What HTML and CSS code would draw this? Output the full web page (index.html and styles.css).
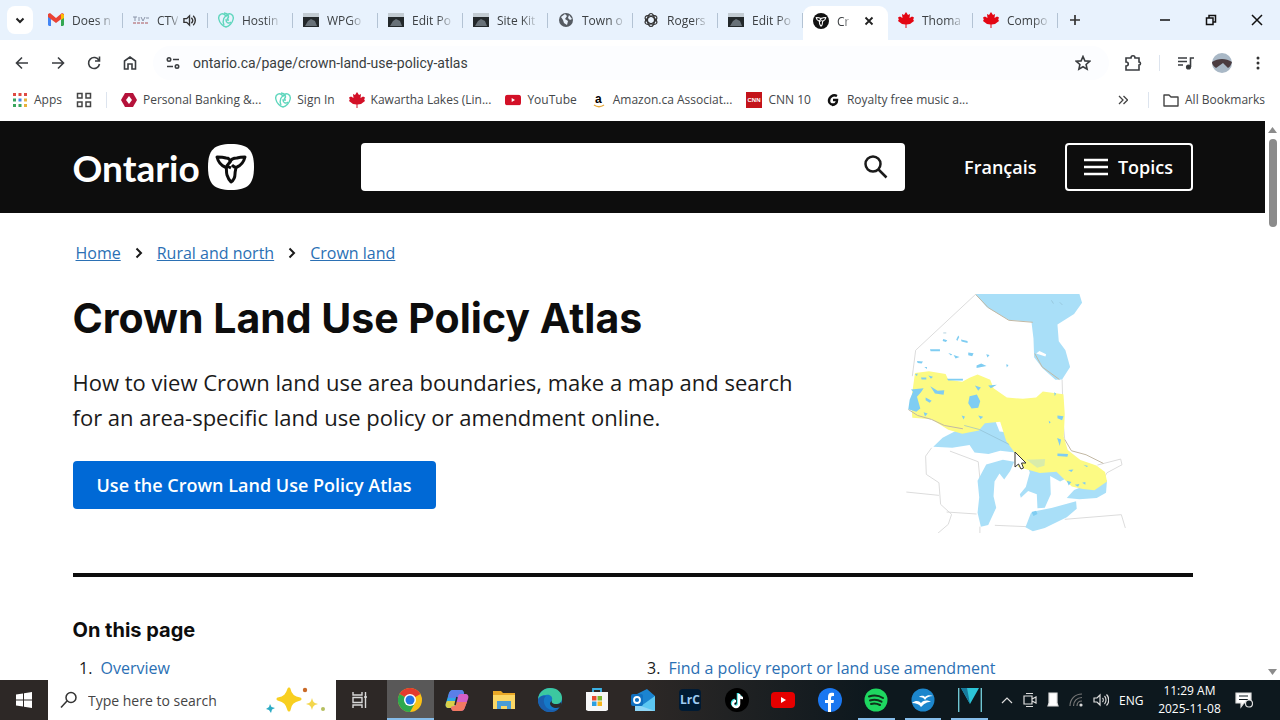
FILE: index.html
```html
<!DOCTYPE html>
<html lang="en">
<head>
    <meta charset="UTF-8">
    <title>Crown Land Use Policy Atlas | ontario.ca</title>
    <link rel="stylesheet" href="styles.css">
</head>
<body>
<!-- shared icons -->
<svg class="defs" width="0" height="0">
    <symbol id="i-photo" viewBox="0 0 16 16"><rect y="1" width="16" height="14" fill="#c3ccd3"/><rect y="5" width="16" height="10" fill="#23282b"/><path d="M2 14l3-5 3-2 4 2 2 5z" fill="#687178"/></symbol>
    <symbol id="i-maple" viewBox="0 0 16 16"><path d="M8 0l2 3 2-1-.5 4L14 4.500l2 1-.8 2 .8 1.500-4 3-3.500.5L8.500 16h-1l0-3.500L4 12 0 9l.8-1.500-.8-2 2-1L4.500 6 4 2l2 1z"/></symbol>
    <symbol id="i-godaddy" viewBox="0 0 16 16"><g fill="none" stroke="#5fd6bd" stroke-width="1.400"><path d="M8 4C5 0 0 2 .8 7c.7 4 4.200 7.500 7.200 8 3-.5 6.500-4 7.200-8C16 2 11 0 8 4"/><path d="M10 3c-4 1-6 5-4 10M11 8H8c0 3 3 4 5 2M6 1c4 0 6 4 3 6"/></g></symbol>
    <symbol id="i-trillium" viewBox="0 0 46 46"><g fill="none" stroke-width="3" stroke-linejoin="round"><path d="M22 18c0-3-1-4-4-4-3-1-6-1-9-1 1 4 3 8 8 10l2 0c0-3 2-3 3-5z"/><path d="M22 18c1-3 4-4 7-4 3-1 5-1 8-1-1 4-3 8-8 10-3 1-4-1-5-2"/><path d="M18 23c1 3 0 5 1 8 1 3 2 5 4 7 3-2 4-5 4-8 0-3 1-5 1-7M19 22l4 2"/></g></symbol>
    <symbol id="i-yt" viewBox="0 0 24 16"><rect width="24" height="16" rx="4"/><path d="M10 5l5 3-5 3z" fill="#fff"/></symbol>
</svg>

<div class="tabstrip">
    <button class="tab-search" aria-label="Search tabs"><svg width="10" height="10" viewBox="0 0 10 10"><path d="M1.500 3.500L5 7l3.500-3.500" fill="none" stroke="#222" stroke-width="2"/></svg></button>
    <div class="tabs">
        <a href="#" class="tab"><svg class="ico" viewBox="0 0 16 16"><path d="M0 3h3v11H1L0 13z" fill="#4285f4"/><path d="M13 3h3v10l-1 1h-2z" fill="#34a853"/><path d="M0 2l2-1 6 5 6-5 2 1v3l-8 6-8-6z" fill="#ea4335"/><path d="M13 2h2l1 1v3l-3 2z" fill="#fbbc04"/></svg><span>Does n</span></a>
        <a href="#" class="tab"><svg class="ico" viewBox="0 0 16 16"><path d="M0 5h4M2 5v4M6 5v4M8 5l2 4 2-4M13 6h3" stroke="#8a94a8" fill="none"/><path d="M0 11h15" stroke="#c9a3ab" stroke-width="2" stroke-dasharray="3 1"/></svg><span>CTV</span><svg class="sound" viewBox="0 0 14 14"><path d="M1 5h3l3-3v10L4 9H1z" fill="none" stroke="#333" stroke-width="1.500"/><path d="M9 4c2 2 2 4 0 6M11 2c3 3 3 7 0 10" fill="none" stroke="#333" stroke-width="1.500"/></svg></a>
        <a href="#" class="tab"><svg class="ico"><use href="#i-godaddy"/></svg><span>Hostin</span></a>
        <a href="#" class="tab"><svg class="ico"><use href="#i-photo"/></svg><span>WPGo</span></a>
        <a href="#" class="tab"><svg class="ico"><use href="#i-photo"/></svg><span>Edit Po</span></a>
        <a href="#" class="tab"><svg class="ico"><use href="#i-photo"/></svg><span>Site Kit</span></a>
        <a href="#" class="tab"><svg class="ico" viewBox="0 0 16 16"><circle cx="8" cy="8" r="7" fill="#555b62"/><path d="M3 5l4-3 2 2-2 3 3 2-1 4-3-2-1-3zM11 3l3 4-2 1-2-2z" fill="#e9f2fc"/></svg><span>Town o</span></a>
        <a href="#" class="tab"><svg class="ico" viewBox="0 0 16 16"><g fill="none" stroke="#333" stroke-width="1.200"><ellipse cx="8" cy="8" rx="3.500" ry="6.500"/><ellipse cx="8" cy="8" rx="3.500" ry="6.500" transform="rotate(60 8 8)"/><ellipse cx="8" cy="8" rx="3.500" ry="6.500" transform="rotate(120 8 8)"/></g></svg><span>Rogers</span></a>
        <a href="#" class="tab"><svg class="ico"><use href="#i-photo"/></svg><span>Edit Po</span></a>
        <a href="#" class="tab active"><svg class="ico" viewBox="0 0 46 46"><circle cx="23" cy="23" r="23" fill="#111"/><use href="#i-trillium" stroke="#fff"/></svg><span>Cr</span><svg class="close" viewBox="0 0 10 10"><path d="M1.500 1.500l7 7M8.500 1.500l-7 7" stroke="#222" stroke-width="1.800"/></svg></a>
        <a href="#" class="tab"><svg class="ico red"><use href="#i-maple"/></svg><span>Thoma</span></a>
        <a href="#" class="tab"><svg class="ico red"><use href="#i-maple"/></svg><span>Compo</span></a>
    </div>
    <button class="new-tab" aria-label="New tab"><svg width="12" height="12" viewBox="0 0 12 12"><path d="M6 1v10M1 6h10" stroke="#333" stroke-width="1.700"/></svg></button>
    <div class="win">
        <button aria-label="Minimize"><svg width="12" height="12"><path d="M1 6h10" stroke="#111" stroke-width="1.500"/></svg></button>
        <button aria-label="Restore"><svg width="12" height="12"><path d="M1.500 4h6.500v6.500H1.500zM4 4V1.500h6.500V8H8" fill="none" stroke="#111" stroke-width="1.500"/></svg></button>
        <button aria-label="Close"><svg width="12" height="12"><path d="M1 1l10 10M11 1L1 11" stroke="#111" stroke-width="1.500"/></svg></button>
    </div>
</div>

<div class="toolbar">
    <button aria-label="Back"><svg width="16" height="16" viewBox="0 0 16 16"><path d="M14 8H3M8 2.500L2.500 8 8 13.500"/></svg></button>
    <button aria-label="Forward"><svg width="16" height="16" viewBox="0 0 16 16"><path d="M2 8h11M8 2.500L13.500 8 8 13.500"/></svg></button>
    <button aria-label="Reload"><svg width="16" height="16" viewBox="0 0 16 16"><path d="M13 5.500A5.500 5.500 0 1 0 13.500 9M13.500 1.500v4.500H9"/></svg></button>
    <button aria-label="Home"><svg width="16" height="16" viewBox="0 0 16 16"><path d="M2.500 14V6L8 2l5.500 4v8H10V9H6v5z"/></svg></button>
    <div class="omnibox">
        <svg width="16" height="16" viewBox="0 0 16 16"><circle cx="4" cy="4.500" r="1.700"/><path d="M8 4.500h6M2 11.500h6"/><circle cx="12" cy="11.500" r="1.700"/></svg>
        <input type="text" aria-label="Address" value="ontario.ca/page/crown-land-use-policy-atlas">
        <svg width="16" height="16" viewBox="0 0 16 16"><path d="M8 1.500l1.900 4.400 4.800.4-3.600 3.200 1 4.700L8 11.700l-4.100 2.500 1-4.700L1.300 6.300l4.800-.4z"/></svg>
    </div>
    <button class="ext" aria-label="Extensions"><svg width="18" height="18" viewBox="0 0 18 18"><path d="M2 4h5c0-3 4-3 4 0h4v4c2 0 2 3 0 3v5H2v-4c3 0 3-4 0-4z"/></svg></button>
    <i class="rule"></i>
    <button class="media" aria-label="Media"><svg width="18" height="16" viewBox="0 0 18 16"><path d="M1 3h9M1 6.500h9M1 10h5M13.500 12V3H17"/><circle cx="11.500" cy="12" r="1.800" fill="#333"/></svg></button>
    <button class="face" aria-label="Profile"><svg width="20" height="20" viewBox="0 0 20 20"><circle cx="10" cy="10" r="10" class="sky"/><path d="M0 9c6-4 14-4 20 0-1 3-2 5-4 6l-5-5-7 5C1 13 0 11 0 9z" class="hill"/></svg></button>
    <button class="more" aria-label="Menu"><svg width="4" height="16"><g class="dots"><circle cx="2" cy="3" r="1.500"/><circle cx="2" cy="8" r="1.500"/><circle cx="2" cy="13" r="1.500"/></g></svg></button>
</div>

<div class="bookmarks">
    <a href="#"><svg class="ico" viewBox="0 0 16 16"><path d="M1 1h3v3H1zM12 1h3v3h-3zM6.500 1h3v3h-3z" fill="#df4a43"/><path d="M1 6.500h3v3H1z" fill="#39a55d"/><path d="M6.500 6.500h3v3h-3z" fill="#4385e5"/><path d="M12 6.500h3v3h-3z" fill="#e7b23b"/><path d="M1 12h3v3H1zM6.500 12h3v3h-3z" fill="#39a55d"/><path d="M12 12h3v3h-3z" fill="#e7b23b"/></svg>Apps</a>
    <a href="#" aria-label="Tab groups"><svg class="ico" viewBox="0 0 16 16"><path d="M1.500 1.500h4.500v4.500H1.500zM10 1.500h4.500v4.500H10zM1.500 10h4.500v4.500H1.500zM10 10h4.500v4.500H10z" fill="none" stroke="#444" stroke-width="1.500"/></svg></a>
    <i class="rule"></i>
    <a href="#"><svg class="ico" viewBox="0 0 16 16"><path d="M4 1h8l4 7-4 7H4L0 8z" fill="#b5123a"/><path d="M8 4l3 4-3 4-3-4z" fill="#fff"/></svg>Personal Banking &amp;...</a>
    <a href="#"><svg class="ico"><use href="#i-godaddy"/></svg>Sign In</a>
    <a href="#"><svg class="ico crimson"><use href="#i-maple"/></svg>Kawartha Lakes (Lin...</a>
    <a href="#"><svg class="ico crimson" viewBox="0 0 16 16"><use href="#i-yt" y="2.500" width="16" height="11"/></svg>YouTube</a>
    <a href="#"><svg class="ico" viewBox="0 0 16 16"><text x="4" y="11" class="amz">a</text><path d="M3 13c3 2 7 2 10 0" fill="none" stroke="#e5a93c" stroke-width="1.500"/></svg>Amazon.ca Associat...</a>
    <a href="#"><svg class="ico" viewBox="0 0 16 16"><rect width="16" height="16" fill="#c4131a"/><text x="8" y="10" class="cnn">CNN</text></svg>CNN 10</a>
    <a href="#"><svg class="ico" viewBox="0 0 16 16"><path d="M12 4C8 2 4 5 4 9c0 3 3 4 5 3M8 8h4c0 3-2 5-5 5" fill="none" stroke="#111" stroke-width="2.500"/></svg>Royalty free music a...</a>
    <button class="overflow" aria-label="More bookmarks"><svg width="10" height="10"><path d="M1 1l4 4-4 4M5.500 1l4 4-4 4" fill="none" stroke="#444" stroke-width="1.300"/></svg></button>
    <i class="rule"></i>
    <a href="#" class="all"><svg class="ico" viewBox="0 0 16 16"><path d="M1 3h5l2 2h7v9H1z" fill="none" stroke="#444" stroke-width="1.400" stroke-linejoin="round"/></svg>All Bookmarks</a>
</div>

<div class="viewport">
    <div class="page">
        <header>
            <div class="wrap head">
                <a href="#" class="logo">Ontario <svg width="46" height="46" viewBox="0 0 46 46"><path d="M23 0c17 0 23 6 23 23s-6 23-23 23S0 40 0 23 6 0 23 0z" fill="#fff"/><use href="#i-trillium" stroke="#0d0d0d"/></svg></a>
                <form class="search">
                    <input type="text" aria-label="Search">
                    <button type="button" aria-label="Submit search"><svg width="26" height="26" viewBox="0 0 26 26"><circle cx="10" cy="10" r="7.500"/><path d="M15.500 15.500l8 8"/></svg></button>
                </form>
                <a href="#" class="lang">Français</a>
                <button class="topics"><svg width="24" height="18"><path d="M0 2h24M0 9h24M0 16h24" stroke="#fff" stroke-width="2.500"/></svg>Topics</button>
            </div>
        </header>
        <main class="wrap">
            <nav class="crumbs">
                <a href="#">Home</a>
                <svg width="8" height="12"><path d="M1.500 1.500L6 6l-4.500 4.500"/></svg>
                <a href="#">Rural and north</a>
                <svg width="8" height="12"><path d="M1.500 1.500L6 6l-4.500 4.500"/></svg>
                <a href="#">Crown land</a>
            </nav>
            <section class="intro">
                <div>
                    <h1>Crown Land Use Policy Atlas</h1>
                    <p>How to view Crown land use area boundaries, make a map and search for an area-specific land use policy or amendment online.</p>
                    <button class="cta">Use the Crown Land Use Policy Atlas</button>
                </div>
                <figure>
                    <svg class="map" viewBox="40 40 670 720">
                        <g fill="none" stroke="#dcdcdc" stroke-width="3">
                            <path d="M250 46L72 212 62 290"/>
                            <path d="M512 300l4 140 4 40M120 505l-18 25 2 55 38 25 5 65 33 30-10 30-35 30M44 638l98 10M165 698l90 6M175 515l85 32 5 50M310 738l95 4M520 720l170-14 12 40M635 600l12-20 45-24-4-17-70 18M265 742v20"/>
                        </g>
                        <g fill="#a9dff8">
                            <path d="M252 43h312l8 26-24 34-50 32 4 50 20 27 14 50-24 38-20 1-38-34-26-34-2-56-6-50-68-6-66-38z"/>
                            <path d="M125 502l28-27 65-34 42-25 50 5 14 35 32 4 12 42 10 18-52-6-35 10-42-5-15-22-52 8z"/>
                            <path d="M258 604l26-49 50-14 34 6-12 28-18 25-14-18-15 24-3 45 8 34-24 52-22 5-10-42 5-46z"/>
                            <path d="M400 541l50-6 50 10 34 47-28 14-30-16 2 55-18 40-22 2-2-42-26-10-22 20-3-10 18-22 12-44z"/>
                            <path d="M402 744l16-42 20-8 42-8 74-20 2 22-30 26-66 32-36 10z"/>
                            <path d="M526 656l22-24 45-18 54-12-3 38-28 16-52 4z"/>
                        </g>
                        <path fill="#fcfa83" d="M70 280l42-5 50 8 8 18 42 6 22-12 24-10 20 8 18 8 10 25 40 28 48 4 40-4 20-18 44 6 18 2 4 60-3 68 12 40 38 30 48 16 26 20 6 28-38 27-34-4-34-8-46-44-50 4-65-18-8-40-28-38-18-58-46 4-18 22-50 10-42-12-50-32-58-4-4-48z"/>
                        <path fill="none" stroke="#c2b8a4" stroke-width="3" d="M50 390l28 18 42 12 38 18 56 10M430 222l22 40 52 38M520 480l20 34 44 12 52 26M252 44l38 40 62 38 72 6"/>
                        <g fill="#7fcdf2">
                            <path d="M58 330l38-4-8 12-12 14 10 35-12 10-24-8 4-28 10-24zM116 320l22 14 20-2-2 14-26-4zM234 350l22-5 10 20-6 20-20 2-10-16z"/>
                            <path d="M155 178l12 4-4 5-10-3zM194 180l6-12 3 4-6 12zM208 180l20 4v6l-18-4zM115 209h30v6h-28zM170 220l12 4-4 4zM186 226l18 6-12 5zM230 219l16 2-4 9-12-3zM284 224l10 2-6 8zM255 258l14-6 16 7-30 6zM76 244l18 2-4 6-12-2zM98 262h8v6zM110 288l14 4-6 6zM88 294h16v6H90zM70 284l8-2-2 8zM166 298h48v5h-44zM250 318l18 6-8 10zM290 318l26-2-18 10zM102 354l18 10-6 6-12-8zM96 398l12 4-8 9zM210 408l10 3-4 9zM260 408l15 4-8 7zM498 408l18 2-4 12-14-6zM497 476l12 4-4 20zM498 522l32 2-2 8-30-2zM526 604l14 4-8 10zM550 616l14-2-4 8zM572 610l10-2v8zM530 572l16-2-6 8zM488 338l6 4-4 8zM344 254l7 2-5 8zM472 424l6 4-5 4zM576 556l14 4-4 3zM420 698l14-4 4 10-12 6z"/>
                        </g>
                        <path fill="#d9ecaa" d="M405 541l56-2-2 20-22 6z"/>
                        <path fill="#fff" d="M434 222l10-8 20 10-2 7z"/>
                        <path fill="none" stroke="#8fbdd0" stroke-width="2" d="M218 438l45 12 90 45M480 62l6 10M505 68l8 8M155 160h9"/>
                    </svg>
                    <svg class="pointer" width="13" height="19" viewBox="0 0 13 19"><path d="M1 1v15l3.500-3 2.500 5 2.500-1-2-5H12z" fill="#fff" stroke="#333"/></svg>
                </figure>
            </section>
            <section class="toc">
                <h2>On this page</h2>
                <ol>
                    <li><a href="#">Overview</a></li>
                    <li value="3"><a href="#">Find a policy report or land use amendment</a></li>
                </ol>
            </section>
        </main>
    </div>
    <div class="scroll">
        <svg width="9" height="6"><path d="M0 6l4.500-6L9 6z" fill="#8b8b8b"/></svg>
        <i></i>
        <svg width="9" height="6"><path d="M0 0l4.500 6L9 0z" fill="#8b8b8b"/></svg>
    </div>
</div>

<footer class="taskbar">
    <button class="start" aria-label="Start"><svg width="16" height="16"><path d="M0 2.500l7-1V7.500H0zM8 1.300L16 0v7.500H8zM0 8.500h7v6L0 13.500zM8 8.500h8V16l-8-1.300z" fill="#fff"/></svg></button>
    <label class="find">
        <svg width="18" height="18" viewBox="0 0 18 18"><circle cx="11" cy="6.500" r="5"/><path d="M7 10l-6 6.500"/></svg>
        <input type="text" placeholder="Type here to search">
        <svg class="spark" width="66" height="26" viewBox="0 0 66 26"><path d="M23 2c1 6 4 9 11 10-7 2-10 4-11 11-2-7-4-9-11-11 7-1 9-4 11-10z" fill="#f8cf20" stroke="#f8cf20" stroke-width="3" stroke-linejoin="round"/><path d="M46 11c1 4 2 5 6 6-4 1-5 2-6 6-1-4-2-5-6-6 4-1 5-2 6-6z" fill="#f3d64c"/><path d="M4 17l1.500 3L9 21l-3 1.500L5 26l-2-3-3-1 3-2z" fill="#2cabc4"/><circle cx="39" cy="3" r="2.200" fill="#c96a28"/><circle cx="57" cy="22" r="2" fill="#b5bf5f"/></svg>
    </label>
    <button class="taskview" aria-label="Task view"><svg width="16" height="16"><path d="M1 0v3h9V0M1 16v-3h9v3M1 5.500h9v5H1zM13.500 0v16M12 5h3" fill="none" stroke="#d8d8d8" stroke-width="1.400"/></svg></button>
    <div class="apps">
        <button class="on" aria-label="Chrome"><svg viewBox="0 0 24 24"><circle cx="12" cy="12" r="12" fill="#fbc116"/><path d="M12 12L1.600 6A12 12 0 0 1 22.400 6z" fill="#e33b2e"/><path d="M1.600 6A12 12 0 0 0 12 24l5-9-5-3z" fill="#2da94f"/><circle cx="12" cy="12" r="6" fill="#fff"/><circle cx="12" cy="12" r="4.500" fill="#2374e6"/></svg></button>
        <button aria-label="Copilot"><svg viewBox="0 0 24 24"><path d="M8 2h8c2 0 3 2 3 4l-4 1-4 12-2 1H4c-3 0-4-2-3-5l3-10c1-2 2-3 4-3z" fill="#2da8e8"/><path d="M8 2h8c2 0 3 2 3 4l-4 1-1 3H3l1-5c1-2 2-3 4-3z" fill="#5b7fe8"/><path d="M1 15l1-2h9l-2 7H4c-3 0-4-2-3-5z" fill="#d9d04a"/><path d="M16 6h4c3 0 4 2 3 5l-3 8c-1 3-2 4-5 4H9c-2 0-3-2-3-4l4-1 3-9c0-2 1-3 3-3z" fill="#d45fc8"/><path d="M11 14h11l-2 5c-1 3-2 4-5 4H9c-2 0-3-2-3-4l4-1z" fill="#f27a62"/><path d="M12 9l-2 8" stroke="#2b2727" stroke-width="1.500"/></svg></button>
        <button aria-label="File Explorer"><svg viewBox="0 0 24 24"><path d="M1 3h8l2 2h12v5H1z" fill="#e9a827"/><path d="M1 7h22v14H1z" fill="#fbd765"/><path d="M5 13h14v8h-4v-3H9v3H5z" fill="#4a9cd6"/></svg></button>
        <button aria-label="Edge"><svg viewBox="0 0 24 24"><circle cx="12" cy="12" r="12" fill="#1578c8"/><path d="M0 11C1 4 6 0 12 0c8 0 12 5 12 10 0 4-3 6-6 6-4 0-5-2-4-4 1-3-2-6-6-5-4 0-7 2-8 4z" fill="#3cc8a0"/><path d="M8 8c-3 2-3 8 1 12 4 3 9 2 12 0-2 3-5 4-9 4C5 24 0 18 0 12c1-3 4-5 8-4z" fill="#1a5fae"/><path d="M14 12c-1 2 0 4 4 4 2 0 4 0 5-2l1 4c-3 3-12 3-12-3z" fill="#2b2a2b"/></svg></button>
        <button aria-label="Store"><svg viewBox="0 0 24 24"><path d="M8 5V1h8v4" fill="none" stroke="#3cb2e6" stroke-width="1.800"/><path d="M1 4h22v18l-2 1H3l-2-1z" fill="#f7f7f7"/><path d="M7 8h4.500v4.500H7z" fill="#e64a2e"/><path d="M12.500 8H17v4.500h-4.500z" fill="#7db72f"/><path d="M7 13.500h4.500V18H7z" fill="#2c9fe0"/><path d="M12.500 13.500H17V18h-4.500z" fill="#f7b51b"/></svg></button>
        <button aria-label="Outlook"><svg viewBox="0 0 24 24"><path d="M6 6l10-5 8 7v12H6z" fill="#1b84d0"/><path d="M24 8L10 18v5h14z" fill="#5cc7f2"/><path d="M4 16l20 7H4z" fill="#8fd6f6"/><rect y="6" width="12" height="12" rx="2" fill="#1070c0"/><circle cx="6" cy="12" r="3" fill="none" stroke="#fff" stroke-width="1.800"/></svg></button>
        <button aria-label="Lightroom Classic"><svg viewBox="0 0 24 24"><rect x="1" y="1" width="22" height="22" rx="4" fill="#001a33"/><text x="12" y="16" class="lrc">LrC</text></svg></button>
        <button aria-label="TikTok"><svg viewBox="0 0 24 24"><circle cx="12" cy="12" r="12" fill="#000"/><path d="M13 5v10a3 3 0 1 1-3-3M13 5c0 3 2 4 4 4" fill="none" stroke="#3fe3e0" stroke-width="2.500"/><path d="M14 6v10a3 3 0 1 1-3-3M14 6c0 3 2 4 4 4" fill="none" stroke="#fff" stroke-width="2.500"/></svg></button>
        <button aria-label="YouTube"><svg class="yt" viewBox="0 0 24 16"><use href="#i-yt"/></svg></button>
        <button aria-label="Facebook"><svg viewBox="0 0 24 24"><circle cx="12" cy="12" r="12" fill="#1a77f0"/><path d="M10 24v-9H7v-3h3V9c0-4 2-5 6-4v3c-2 0-3 0-3 2v2h3l-.5 3H13v9z" fill="#fff"/></svg></button>
        <button class="run" aria-label="Spotify"><svg viewBox="0 0 24 24"><circle cx="12" cy="12" r="11.500" fill="#1ed760"/><path d="M5 8.500c5-1.500 10-1 14 1.500M6 12.500c4-1.300 8-.8 11.500 1.200M7 16c3-1 6-.6 9 1" fill="none" stroke="#10301b" stroke-width="2" stroke-linecap="round"/></svg></button>
        <button class="run" aria-label="OpenOffice"><svg viewBox="0 0 24 24"><circle cx="12" cy="12" r="11.500" fill="#1c86cc"/><path d="M8 9c3-2 5-1 6 0 2-2 5-2 8-1-4 0-6 1-8 4-1-2-3-3-6-3zM1 15c4-3 7-2 9 0 3-3 6-3 10-1-5 0-7 2-10 5-2-3-5-4-9-4z" fill="#fff"/></svg></button>
        <button class="run" aria-label="Movie editor"><svg viewBox="0 0 24 24"><path d="M.7 0v24M23.300 0v24" stroke="#6fc5d2" stroke-width="1.400"/><path d="M3 0h18l-9 16z" fill="#2cc5d8"/><path d="M3 0h6l3 16z" fill="#187a9c"/></svg></button>
    </div>
    <div class="tray">
        <svg width="12" height="8"><path d="M1 7l5-5 5 5"/></svg>
        <svg width="14" height="16"><path d="M1 4h8v8H1zM9 7l4-2v6l-4-2M3 1.500h7M3 14.500h7"/></svg>
        <svg width="12" height="16"><path d="M2 1h8v10l1 3H1l1-3z" fill="#fff"/></svg>
        <svg width="14" height="14"><g class="wifi"><path d="M1 13C1 6 6 1 13 1M4.500 13c0-5 3.500-8.500 8.500-8.500M8 13c0-3 2-5 5-5"/></g><circle cx="12" cy="12" r="1" fill="#ddd"/></svg>
        <svg width="16" height="14"><path d="M1 5h3l3-3v10L4 9H1zM9.500 5c1 1 1 3 0 4M11.500 3c2 2 2 6 0 8M13.500 1.500c3 3 3 8 0 11"/></svg>
        <span class="eng">ENG</span>
        <span class="clock">11:29 AM<br>2025-11-08</span>
        <svg width="18" height="18"><path d="M1 2h15v10H9l-3 4v-4H1z" fill="#fff"/><path d="M4 5h9M4 8.500h9" class="ink"/><circle cx="14" cy="12.500" r="3.500" class="badge"/></svg>
    </div>
</footer>
</body>
</html>
```
FILE: styles.css
```css
* {
    box-sizing: border-box;
}
body {
    margin: 0;
    height: 100vh;
    display: flex;
    flex-direction: column;
    overflow: hidden;
    background: #fff;
    color: #1a1a1a;
    font-family: "Open Sans", sans-serif;
}
button, input {
    font: inherit;
    border: 0;
    padding: 0;
    background: none;
    color: inherit;
}
button {
    display: flex;
    align-items: center;
    justify-content: center;
}
a {
    color: inherit;
    text-decoration: none;
}
svg {
    flex: none;
    display: block;
}
.defs {
    position: absolute;
}
.ico {
    width: 16px;
    height: 16px;
}
.red { fill: #e30613; }
.crimson { fill: #d31027; }

/* tab strip */
.tabstrip {
    flex: none;
    height: 40px;
    display: flex;
    align-items: center;
    background: #e8f2fd;
    font-size: 12px;
    color: #3c4043;
}
.tab-search {
    flex: none;
    width: 26px;
    height: 28px;
    margin: 0 5px 0 7px;
    border-radius: 8px;
    background: #fff;
}
.tabs {
    flex: 0 1 1020px;
    min-width: 0;
    align-self: stretch;
    display: flex;
}
.tab {
    position: relative;
    flex: 1;
    min-width: 0;
    display: flex;
    align-items: center;
    gap: 8px;
    padding: 0 4px 0 10px;
}
.tab::after {
    content: "";
    position: absolute;
    right: 0;
    top: 13px;
    height: 15px;
    border-right: 1px solid #b3c3d4;
}
.tab span {
    white-space: nowrap;
    mask-image: linear-gradient(to right, #000 65%, #0003);
}
.tab .sound {
    width: 13px;
    height: 13px;
    margin-left: -3px;
}
.tab .close {
    width: 10px;
    height: 10px;
    margin: 0 10px 0 auto;
}
.active {
    align-self: flex-end;
    height: 34px;
    padding-bottom: 4px;
    background: #fff;
    border-radius: 9px 9px 0 0;
}
.active::after {
    display: none;
}
.new-tab {
    width: 34px;
    height: 28px;
}
.win {
    margin-left: auto;
    display: flex;
}
.win button {
    width: 46px;
    height: 40px;
}

/* address row */
.toolbar {
    flex: none;
    height: 46px;
    display: flex;
    align-items: center;
    padding: 0 9px 0 4px;
    font: 14px Roboto, sans-serif;
}
.toolbar button {
    width: 36px;
    height: 30px;
}
.toolbar svg {
    fill: none;
    stroke: #3a3d40;
    stroke-width: 1.600;
}
.omnibox {
    flex: 1;
    display: flex;
    align-items: center;
    gap: 12px;
    height: 34px;
    margin: 0 6px 0 5px;
    padding: 0 18px 0 12px;
    border-radius: 17px;
    background: #fcfdff;
}
.omnibox input {
    flex: 1;
    outline: 0;
    color: #3a3d40;
}
.rule {
    width: 1px;
    height: 16px;
    background: #dde4ee;
}
.toolbar .rule {
    margin: 0 8px;
}
.toolbar .more {
    width: 36px;
    margin-right: -5px;
}
.toolbar .dots {
    fill: #333;
    stroke: none;
}
.toolbar .sky {
    fill: #a9b8c6;
    stroke: none;
}
.toolbar .hill {
    fill: #4b3c40;
    stroke: none;
}

/* bookmarks */
.bookmarks {
    flex: none;
    height: 35px;
    display: flex;
    align-items: center;
    gap: 14px;
    padding: 0 15px 8px 12px;
    font-size: 12px;
    color: #44474a;
    white-space: nowrap;
}
.bookmarks a {
    display: flex;
    align-items: center;
    gap: 6px;
}
.overflow {
    margin-left: auto;
}
.overflow + .rule {
    margin-left: 6px;
}
.amz {
    font: bold 12px "Liberation Sans", sans-serif;
}
.cnn {
    font: bold 6px "Liberation Sans", sans-serif;
    text-anchor: middle;
    fill: #fff;
}

/* web page */
.viewport {
    flex: 1;
    min-height: 0;
    display: flex;
}
.page {
    flex: 1;
    overflow: hidden;
}
.wrap {
    max-width: 1120px;
    margin: 0 auto;
}
header {
    background: #0d0d0d;
    color: #fff;
}
.head {
    height: 92px;
    display: flex;
    align-items: center;
}
.logo {
    width: 288px;
    display: flex;
    align-items: center;
    gap: 8px;
    font: bold 37px Lato, sans-serif;
}
.search {
    flex: 0 1 544px;
    height: 48px;
    display: flex;
    border-radius: 4px;
    background: #fff;
}
.search input {
    flex: 1;
    padding: 0 16px;
    color: #1a1a1a;
    outline: 0;
}
.search button {
    width: 58px;
}
.search svg {
    fill: none;
    stroke: #1a1a1a;
    stroke-width: 2.500;
}
.lang {
    margin-left: auto;
    font-size: 18px;
    font-weight: 600;
}
.topics {
    width: 128px;
    height: 48px;
    margin-left: 28px;
    gap: 10px;
    border: 2px solid #fff;
    border-radius: 4px;
    font-size: 18px;
    font-weight: 600;
}
.crumbs {
    display: flex;
    align-items: center;
    gap: 14px;
    padding: 28px 3px 0;
    line-height: 24px;
    color: #2b70b4;
}
.crumbs a {
    text-decoration: underline;
}
.crumbs svg {
    fill: none;
    stroke: #1a1a1a;
    stroke-width: 2;
}
.intro {
    display: grid;
    grid-template-columns: 1fr 352px;
    gap: 32px;
    border-bottom: 4px solid #0d0d0d;
}
h1 {
    margin: 28px 0 22px;
    color: #0d0d0d;
    font: bold 41px/50px Inter, sans-serif;
}
.intro p {
    margin: 0 0 26px;
    font-size: 22px;
    line-height: 35px;
}
.cta {
    height: 48px;
    padding: 0 24px;
    border-radius: 4px;
    background: #0069d6;
    color: #fff;
    font-size: 18px;
    font-weight: 600;
}
figure {
    position: relative;
    margin: 28px auto 40px;
}
.map {
    width: 223px;
}
.pointer {
    position: absolute;
    left: 109px;
    top: 158px;
}
h2 {
    margin: 39px 0 12px;
    color: #0d0d0d;
    font: bold 20px/28px Inter, sans-serif;
}
.toc ol {
    display: grid;
    grid-template-columns: 1fr 1fr;
    gap: 40px;
    margin: 0;
    padding-left: 24px;
    line-height: 24px;
}
.toc li {
    padding-left: 4px;
}
.toc a {
    color: #2b70b4;
}
.scroll {
    width: 15px;
    display: flex;
    flex-direction: column;
    align-items: center;
    padding: 6px 0 5px;
}
.scroll i {
    width: 8px;
    height: 88px;
    margin: 6px 0 auto;
    border-radius: 4px;
    background: #8b8b8b;
}

/* taskbar */
.taskbar {
    flex: none;
    height: 40px;
    display: flex;
    align-items: center;
    background: linear-gradient(to right, #2d2826 50%, #0d181e 68%);
    color: #fff;
}
.start, .taskview {
    width: 48px;
    height: 40px;
}
.find {
    width: 288px;
    height: 40px;
    display: flex;
    align-items: center;
    gap: 10px;
    padding: 0 4px 0 12px;
    background: #fff;
    font-size: 14px;
}
.find svg {
    fill: none;
    stroke: #333;
    stroke-width: 1.500;
}
.find .spark {
    stroke: none;
}
.find input {
    flex: 1;
    min-width: 0;
    color: #333;
}
.find input::placeholder {
    color: #444;
}
.apps {
    flex: 0 1 606px;
    margin-left: 3px;
    display: flex;
}
.apps button {
    position: relative;
    flex: 1;
    height: 40px;
}
.apps svg {
    width: 24px;
    height: 24px;
}
.apps .yt {
    height: 16px;
    fill: #e60000;
}
.apps .on {
    background: #595858;
}
.on::after, .run::after {
    content: "";
    position: absolute;
    left: 5px;
    right: 5px;
    bottom: 0;
    height: 2px;
    background: #86bdea;
}
.on::after {
    left: 0;
    right: 0;
}
.lrc {
    font: bold 12px "Open Sans", sans-serif;
    text-anchor: middle;
    fill: #9fcbf2;
}
.tray {
    flex: 1;
    display: flex;
    align-items: center;
    gap: 10px;
    padding-left: 8px;
    font-size: 12px;
}
.tray svg {
    fill: none;
    stroke: #ddd;
    stroke-width: 1.200;
}
.tray .wifi {
    stroke: #777;
}
.tray .ink {
    stroke: #0d181e;
}
.tray .badge {
    fill: #0d181e;
}
.clock {
    width: 72px;
    text-align: center;
    line-height: 18px;
}
```
